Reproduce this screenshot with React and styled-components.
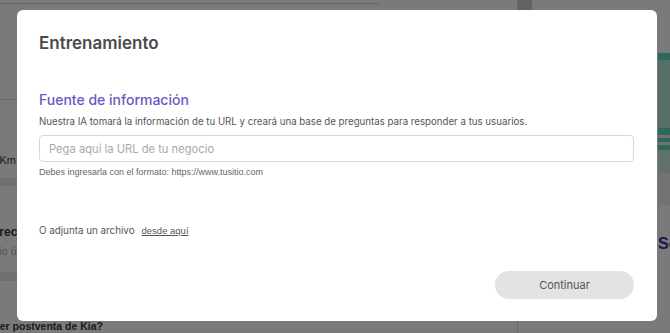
import React from 'react';
import styled, { createGlobalStyle } from 'styled-components';

const GlobalStyle = createGlobalStyle`
  html, body {
    margin: 0;
    padding: 0;
    width: 670px;
    height: 333px;
    overflow: hidden;
    background: #ffffff;
    font-family: Inter, "Noto Sans", sans-serif;
  }
`

// ---------- page behind the dialog ----------
const Page = styled.div`
  display: flex;
  width: 670px;
  height: 333px;
  overflow: hidden;
`
const MainColumn = styled.div`
  width: 517px;
  display: flex;
  flex-direction: column;
  flex-shrink: 0;
`
const TopRule = styled.div`
  width: 380px;
  height: 3px;
  border-bottom: 1px solid #d8d8d8;
`
const Divider = styled.div`
  margin-top: ${props => `${props.top}px`};
  height: ${props => `${props.size || 1}px`};
  background: ${props => props.color || '#dcdcdc'};
`
// text that runs off the left edge of the page: its end sits at `width`
const ClippedLine = styled.div`
  display: flex;
  justify-content: flex-end;
  width: ${props => `${props.width}px`};
  margin-top: ${props => `${props.top}px`};
  white-space: nowrap;
  font-family: "Liberation Sans", Arial, sans-serif;
  font-size: ${props => `${props.size || 11}px`};
  line-height: ${props => `${props.size ? props.size + 4 : 15}px`};
  font-weight: ${props => props.bold ? 700 : 400};
  color: ${props => props.muted ? '#a9a9a9' : '#3a3a3a'};
`
const ScrollTrack = styled.div`
  width: 14px;
  flex-shrink: 0;
  display: flex;
  flex-direction: column;
  border-left: 1px solid #dadada;
`
const ScrollThumb = styled.div`
  height: 10px;
  background: #cfcfcf;
`
const SideColumn = styled.div`
  flex: 1;
  padding: 53px 0 0 126px;
  display: flex;
  flex-direction: column;
`
const Stripe = styled.div`
  height: ${props => `${props.h}px`};
  background: ${props => props.color};
`
const SideHeading = styled.div`
  margin-top: 30px;
  font-family: "Liberation Sans", Arial, sans-serif;
  font-weight: 700;
  font-size: 16px;
  color: #3a3699;
  white-space: nowrap;
`

// ---------- dialog ----------
const Backdrop = styled.div`
  position: fixed;
  inset: 0;
  background: rgba(0, 0, 0, 0.52);
  display: flex;
  align-items: flex-start;
  padding: 10px 0 0 17px;
`
const Modal = styled.div`
  width: 640px;
  height: 311px;
  box-sizing: border-box;
  background: #fff;
  border-radius: 6px;
  padding: 21px 23px 0 22px;
  display: flex;
  flex-direction: column;
`
const Title = styled.h2`
  margin: 0;
  font-size: 17px;
  line-height: 24px;
  font-weight: 600;
  color: #4a4a4a;
`
const SectionTitle = styled.h3`
  margin: 35px 0 0;
  font-size: 14px;
  line-height: 20px;
  font-weight: 500;
  color: #6a58c4;
`
const Description = styled.p`
  margin: 4px 0 0;
  font-size: 9.7px;
  line-height: 16px;
  color: #555;
`
const UrlInput = styled.input`
  margin-top: 5px;
  height: 27px;
  box-sizing: border-box;
  width: 100%;
  border: 1px solid #d8d8d8;
  border-radius: 4px;
  padding: 0 9px;
  font-family: Inter, sans-serif;
  font-size: 11.2px;
  color: #333;
  outline: none;
  &::placeholder {
    color: #a9a9a9;
  }
`
const Hint = styled.div`
  margin-top: 4px;
  font-family: "Liberation Sans", Arial, sans-serif;
  font-size: 9px;
  line-height: 12px;
  color: #666;
`
const AttachRow = styled.div`
  margin-top: 45px;
  display: flex;
  align-items: baseline;
  gap: 7px;
  font-size: 9.8px;
  line-height: 16px;
  color: #555;
`
const AttachLink = styled.a`
  font-family: "Liberation Sans", Arial, sans-serif;
  font-size: 9.5px;
  color: #555;
  text-decoration: underline;
  cursor: pointer;
`
const Footer = styled.div`
  margin-top: 32px;
  display: flex;
  justify-content: flex-end;
`
const ContinueButton = styled.button`
  width: 139px;
  height: 28px;
  border: none;
  border-radius: 14px;
  background: #e3e3e3;
  font-family: Inter, sans-serif;
  font-size: 11px;
  color: #555;
  cursor: pointer;
`

const App = () => {
  const [url, setUrl] = React.useState('');
  return (
    <>
      <GlobalStyle />
      <Page>
        <MainColumn>
          <TopRule />
          <Divider top={95} />
          <ClippedLine width={16} top={53}>Kilometraje: 10.000 Km</ClippedLine>
          <Divider top={10} size={9} color="#ebebeb" />
          <ClippedLine width={28} top={38} bold size={12}>Atención directa</ClippedLine>
          <ClippedLine width={37} top={4} muted>Servicio único</ClippedLine>
          <Divider top={13} size={9} color="#ebebeb" />
          <ClippedLine width={103} top={38} bold size={10.5}>¿Cómo es el servicio de taller postventa de Kia?</ClippedLine>
        </MainColumn>
        <ScrollTrack>
          <ScrollThumb />
        </ScrollTrack>
        <SideColumn>
          <Stripe h={7} color="#5fd9bf" />
          <Stripe h={68} color="#b9e6d9" />
          <Stripe h={7} color="#5fd9bf" />
          <Stripe h={3} color="#e8f2ee" />
          <Stripe h={4} color="#5fd9bf" />
          <Stripe h={3} color="#e8f2ee" />
          <Stripe h={5} color="#5fd9bf" />
          <Stripe h={23} color="#cfe8e0" />
          <Stripe h={32} color="#f0f0f0" />
          <SideHeading>Servicios</SideHeading>
        </SideColumn>
      </Page>
      <Backdrop>
        <Modal>
          <Title>Entrenamiento</Title>
          <SectionTitle>Fuente de información</SectionTitle>
          <Description>
            Nuestra IA tomará la información de tu URL y creará una base de preguntas para responder a tus usuarios.
          </Description>
          <UrlInput
            value={url}
            onChange={e => setUrl(e.target.value)}
            placeholder="Pega aquí la URL de tu negocio"
          />
          <Hint>Debes ingresarla con el formato: https://www.tusitio.com</Hint>
          <AttachRow>
            <span>O adjunta un archivo</span>
            <AttachLink>desde aquí</AttachLink>
          </AttachRow>
          <Footer>
            <ContinueButton>Continuar</ContinueButton>
          </Footer>
        </Modal>
      </Backdrop>
    </>
  );
}

export default App;
